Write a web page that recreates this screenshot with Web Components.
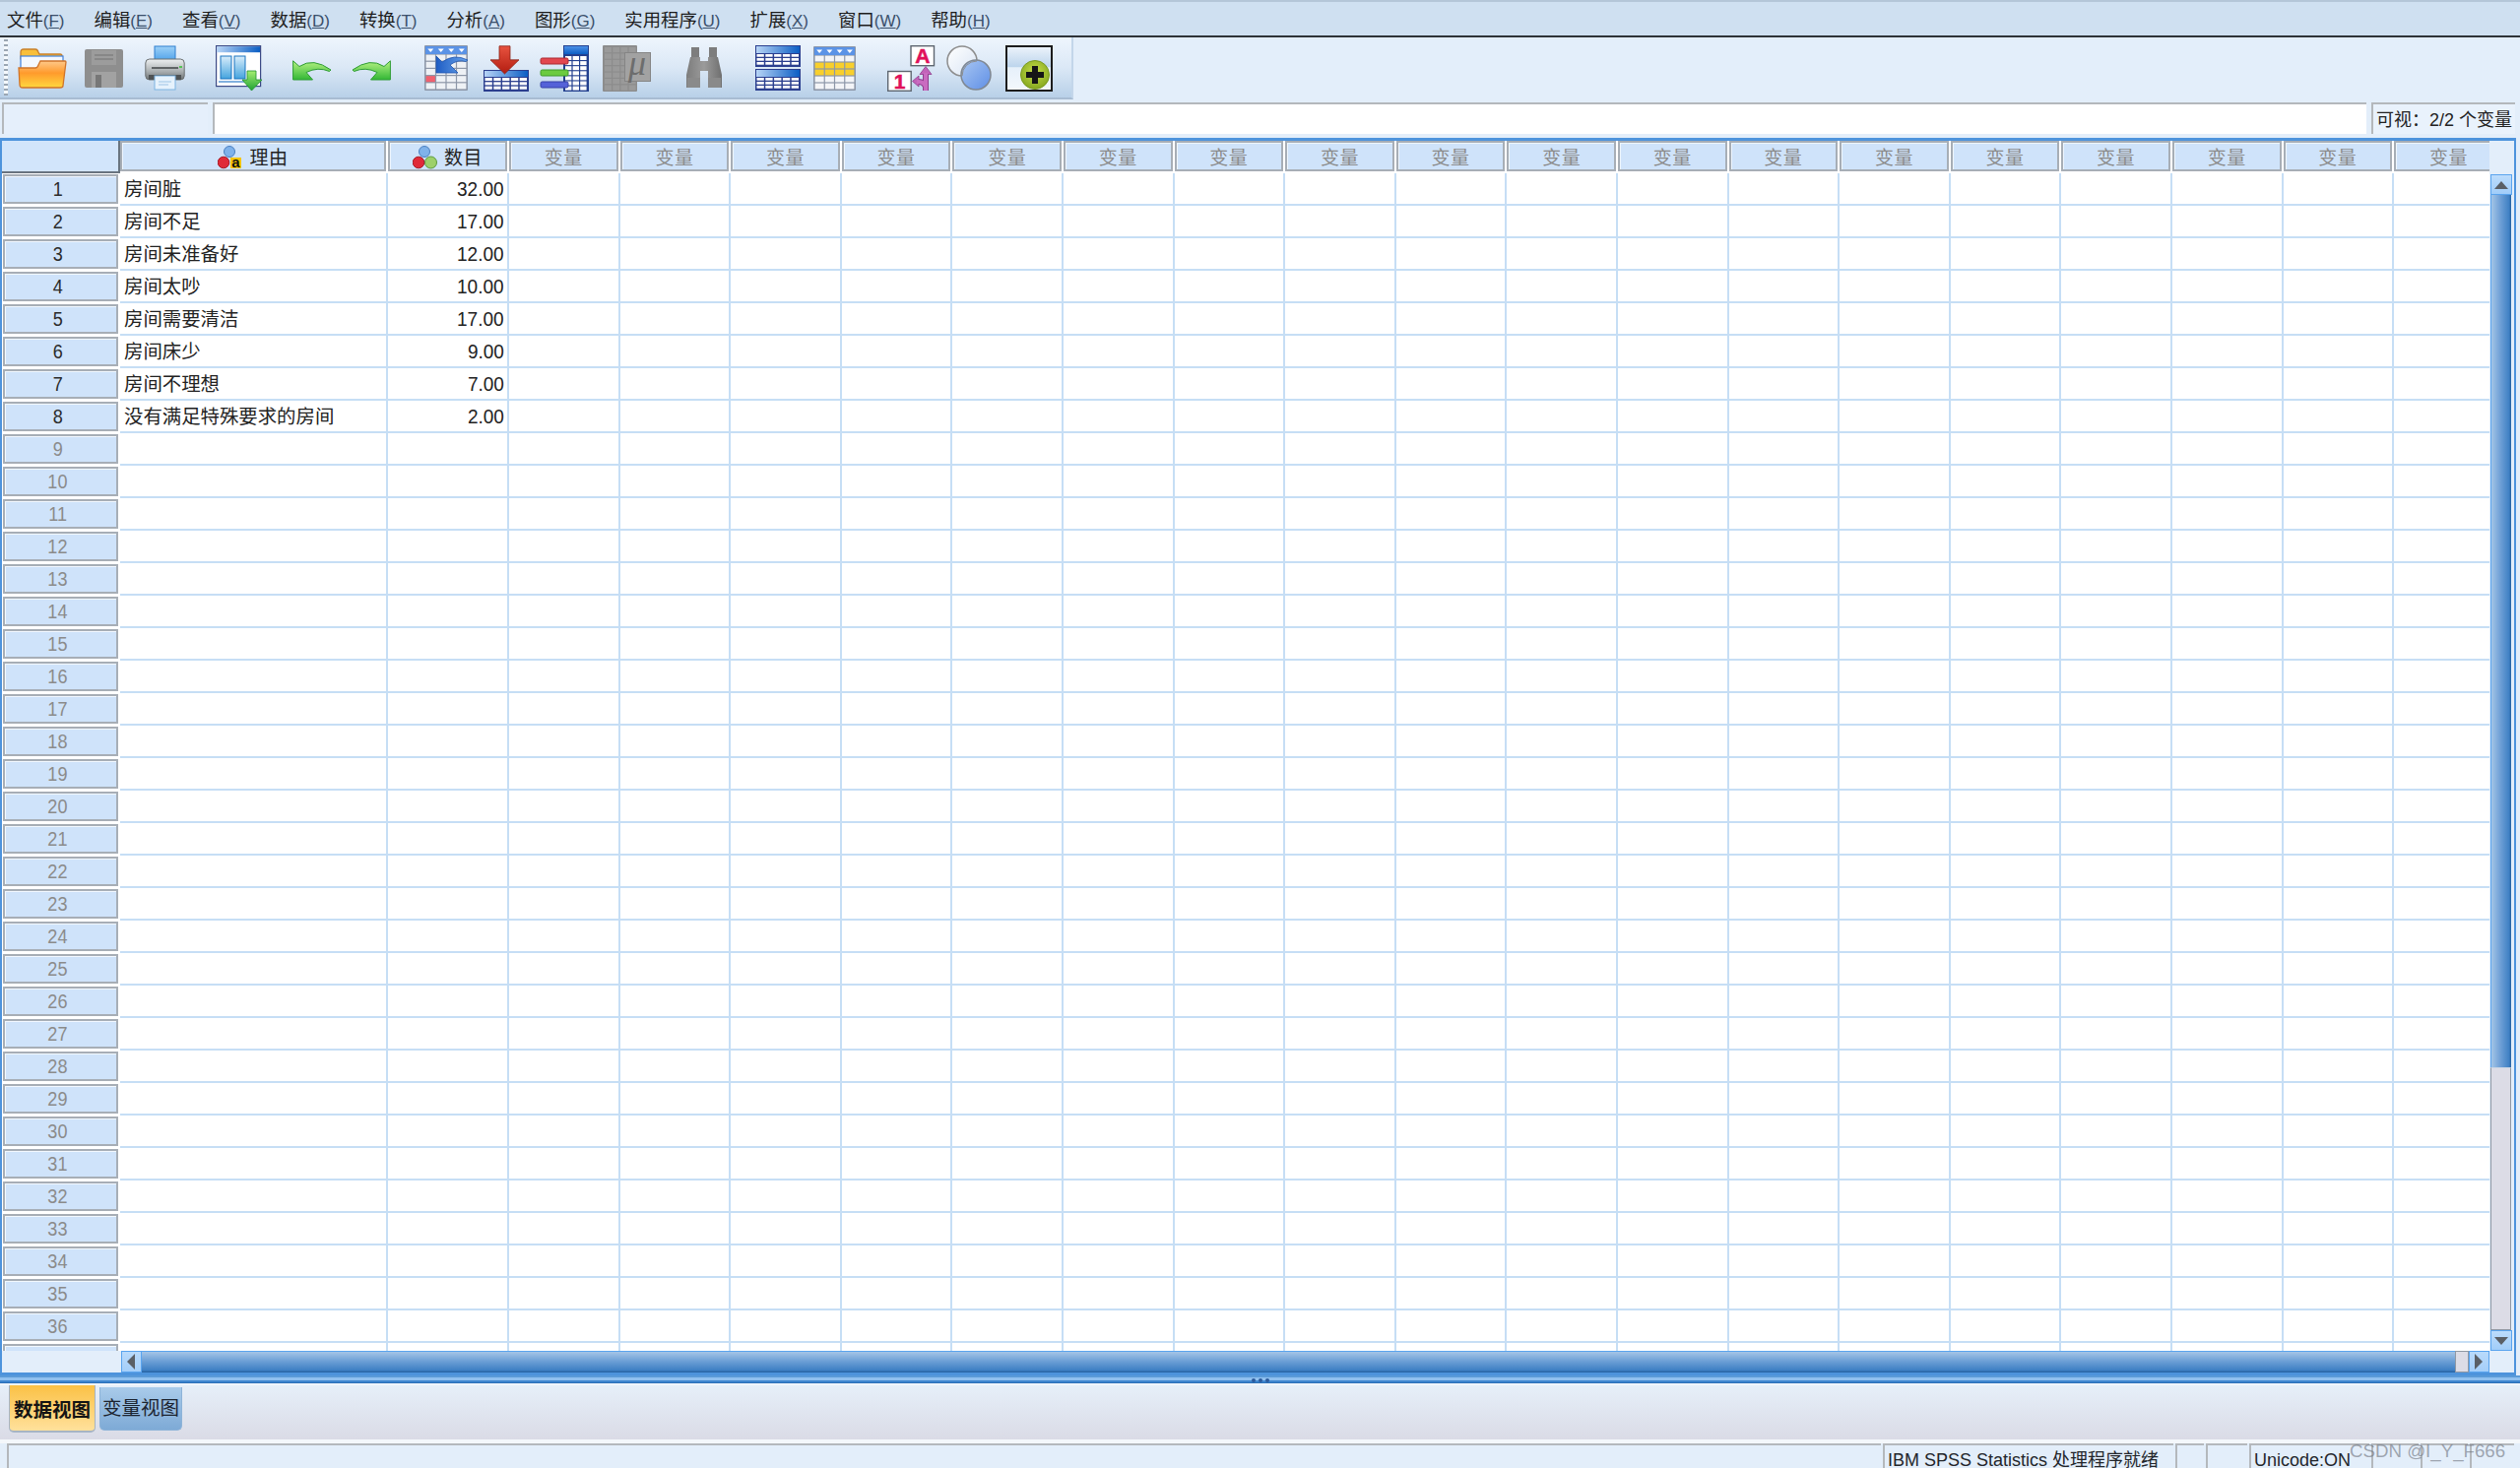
<!DOCTYPE html>
<html lang="zh">
<head>
<meta charset="utf-8">
<title>IBM SPSS Statistics 数据编辑器</title>
<style>
  html, body { margin: 0; padding: 0; height: 100%; overflow: hidden; }
  body {
    display: flex;
    flex-direction: column;
    width: 2559px;
    height: 1491px;
    background: #e3eefa;
    color: #222;
    font-family: "Liberation Sans", "Noto Sans CJK SC", sans-serif;
  }
</style>
</head>
<body>
  <spss-menubar>
    <menu-item key="F">文件</menu-item>
    <menu-item key="E">编辑</menu-item>
    <menu-item key="V">查看</menu-item>
    <menu-item key="D">数据</menu-item>
    <menu-item key="T">转换</menu-item>
    <menu-item key="A">分析</menu-item>
    <menu-item key="G">图形</menu-item>
    <menu-item key="U">实用程序</menu-item>
    <menu-item key="X">扩展</menu-item>
    <menu-item key="W">窗口</menu-item>
    <menu-item key="H">帮助</menu-item>
  </spss-menubar>
  <spss-toolbar></spss-toolbar>
  <spss-entrybar>可视：2/2 个变量</spss-entrybar>
  <spss-datagrid></spss-datagrid>
  <spss-splitter></spss-splitter>
  <spss-tabs>
    <view-tab active>数据视图</view-tab>
    <view-tab>变量视图</view-tab>
  </spss-tabs>
  <spss-statusbar>
    <status-cell w="1903"></status-cell>
    <status-cell w="295">IBM SPSS Statistics 处理程序就绪</status-cell>
    <status-cell w="29"></status-cell>
    <status-cell w="42"></status-cell>
    <status-cell w="122">Unicode:ON</status-cell>
    <status-cell w="48"></status-cell>
    <status-cell w="48"></status-cell>
    <status-cell w="45"></status-cell>
  </spss-statusbar>

<script>
const FONT = `"Liberation Sans", "Noto Sans CJK SC", sans-serif`;

class MenuItem extends HTMLElement {
  constructor() {
    super();
    this.attachShadow({ mode: "open" });
  }
  connectedCallback() {
    this.shadowRoot.innerHTML = `
      <style>
        :host { display: block; font: 18.4px/1 ${FONT}; color: #1d1d1d; white-space: nowrap; }
        span { color: #3a4f6b; font-size: 17px; }
      </style>
      <slot></slot><span>(<u>${this.getAttribute("key")}</u>)</span>`;
  }
}
customElements.define("menu-item", MenuItem);

class SpssMenubar extends HTMLElement {
  constructor() {
    super();
    this.attachShadow({ mode: "open" }).innerHTML = `
      <style>
        :host {
          display: flex;
          flex: none;
          align-items: center;
          gap: 30px;
          box-sizing: border-box;
          height: 38px;
          padding: 4px 0 0 7px;
          background: #cfe0f1;
          border-top: 2px solid #b4c6d8;
          border-bottom: 2px solid #2e3338;
        }
      </style>
      <slot></slot>`;
  }
}
customElements.define("spss-menubar", SpssMenubar);

// small helpers for the table shaped toolbar icons
function blueTable(x, y, w, h, head) {
  let out = `<rect x="${x}" y="${y}" width="${w}" height="${h}" fill="#2b3f8f"/>
    <rect x="${x + 1}" y="${y + 1}" width="${w - 2}" height="${head}" fill="url(#tblHead)"/>`;
  const cols = 5, rows = 3;
  const cw = (w - 2) / cols, ch = (h - head - 3) / rows;
  for (let r = 0; r < rows; r++) {
    for (let c = 0; c < cols; c++) {
      out += `<rect x="${x + 1.5 + c * cw}" y="${y + head + 2 + r * ch}" width="${cw - 1.5}" height="${ch - 1.3}" fill="#fff"/>`;
    }
  }
  return out;
}

function filterTable(w, h, colors) {
  let out = `<rect width="${w}" height="${h}" rx="1" fill="#8d97a8"/>
    <rect x="1" y="1" width="${w - 2}" height="8" fill="#5b93e6"/>`;
  const cw = (w - 2) / 4, ch = (h - 10) / 5;
  for (let c = 0; c < 4; c++) {
    const cx = 1 + c * cw + cw / 2;
    out += `<path d="M${cx - 3} 3.5h6l-3 3.5z" fill="#fff"/>`;
    for (let r = 0; r < 5; r++) {
      out += `<rect x="${1.6 + c * cw}" y="${9.6 + r * ch}" width="${cw - 1.2}" height="${ch - 1.2}" fill="${colors(r, c)}"/>`;
    }
  }
  return out;
}

const arrowPath = "M0.6 .8 L7 6.5 Q21 -3 39 10 L37.5 11.5 Q26 6.5 14 12.5 L20.5 20 H.6 Z";

const TOOL_ICONS = [
  // open folder
  { gap: 18, w: 49, h: 42, body: `
    <defs><linearGradient id="fo" x1="0" y1="0" x2="0" y2="1">
      <stop offset="0" stop-color="#ffc98a"/><stop offset=".45" stop-color="#ff9a2c"/><stop offset="1" stop-color="#ffd83f"/>
    </linearGradient></defs>
    <path d="M3 12V5q0-3 3-3h12q2 0 3 3l1 2h21q2 0 2 2v8z" fill="#f9bf3a" stroke="#c9802a" stroke-width="1.3"/>
    <rect x="3" y="9" width="43" height="14" fill="#f4f8fe" stroke="#3f80dc" stroke-width="1.2"/>
    <path d="M1 21h17q2 0 3-3l2-4h25q1 0 1 1l-3 24q0 2-3 2H5q-3 0-3-3z" fill="url(#fo)" stroke="#d0742a" stroke-width="1.3"/>` },
  // save, disabled
  { gap: 19, w: 39, h: 39, body: `
    <rect width="39" height="39" rx="2" fill="#8e8e8e"/>
    <rect x="7" y="1" width="25" height="15" fill="#9c9c9c"/>
    <path d="M10 6h19M10 10h19" stroke="#808080" stroke-width="1.5"/>
    <rect x="7" y="23" width="25" height="16" fill="#a2a2a2"/>
    <rect x="11" y="26" width="6" height="13" fill="#777"/>` },
  // print
  { gap: 22, w: 41, h: 46, body: `
    <defs><linearGradient id="pr" x1="0" y1="0" x2="0" y2="1">
      <stop offset="0" stop-color="#eef1f2"/><stop offset=".6" stop-color="#a9aeb0"/><stop offset="1" stop-color="#6d7274"/>
    </linearGradient>
    <linearGradient id="pp" x1="0" y1="0" x2="0" y2="1">
      <stop offset="0" stop-color="#9dd0f7"/><stop offset="1" stop-color="#4da2ea"/>
    </linearGradient></defs>
    <rect x="10" y="1" width="21" height="15" fill="url(#pp)" stroke="#2e7fd0"/>
    <path d="M7 14h27v3H7z" fill="#555"/>
    <rect x=".8" y="14" width="39.4" height="21" rx="4" fill="url(#pr)" stroke="#6b7072"/>
    <path d="M7 23h27" stroke="#5f6365" stroke-width="2"/>
    <rect x="35" y="21" width="3" height="2" fill="#56c256"/>
    <rect x="4" y="30" width="33" height="5" fill="#4f5355"/>
    <rect x="10" y="31" width="21" height="14" fill="#e6f2fc" stroke="#7db3e2"/>
    <path d="M14 37h13M14 40h10" stroke="#9dc3e6" stroke-width="1.2"/>` },
  // go to data editor
  { gap: 31, w: 47, h: 46, body: `
    <defs><linearGradient id="tblHead" x1="0" y1="0" x2="1" y2="0">
      <stop offset="0" stop-color="#b7d4f6"/><stop offset="1" stop-color="#0b5ec4"/>
    </linearGradient>
    <linearGradient id="gd" x1="0" y1="0" x2="0" y2="1">
      <stop offset="0" stop-color="#a6ef71"/><stop offset="1" stop-color="#1fa234"/>
    </linearGradient>
    <linearGradient id="cl" x1="0" y1="0" x2="0" y2="1">
      <stop offset="0" stop-color="#d9edfb"/><stop offset="1" stop-color="#45a4de"/>
    </linearGradient></defs>
    <rect x=".6" y=".6" width="45" height="41" fill="#fff" stroke="#3c4a86" stroke-width="1.2"/>
    <rect x="1.2" y="1.2" width="43.8" height="6" fill="url(#tblHead)"/>
    <rect x="5" y="11" width="11" height="23" fill="url(#cl)" stroke="#1b74c0"/>
    <rect x="19" y="11" width="11" height="23" fill="url(#cl)" stroke="#1b74c0"/>
    <path d="M3 37h30" stroke="#4b8fd0" stroke-width="1.4"/>
    <path d="M32 26h9v9h6L36.500 46 27 35h5z" fill="url(#gd)" stroke="#1e8f2e" stroke-width=".8"/>` },
  // undo
  { gap: 31, w: 40, h: 21, top: 5, body: `
    <defs><linearGradient id="ar" x1="0" y1="0" x2="0" y2="1">
      <stop offset="0" stop-color="#b6f282"/><stop offset="1" stop-color="#32b736"/>
    </linearGradient></defs>
    <path d="${arrowPath}" fill="url(#ar)" stroke="#2f9c35" stroke-width="1"/>` },
  // redo
  { gap: 20, w: 40, h: 21, top: 5, body: `
    <defs><linearGradient id="ar2" x1="0" y1="0" x2="0" y2="1">
      <stop offset="0" stop-color="#b6f282"/><stop offset="1" stop-color="#32b736"/>
    </linearGradient></defs>
    <path transform="matrix(-1 0 0 1 40 0)" d="${arrowPath}" fill="url(#ar2)" stroke="#2f9c35" stroke-width="1"/>` },
  // go to case
  { gap: 34, w: 44, h: 46, body: `
    <defs><linearGradient id="ba" x1="0" y1="0" x2="1" y2="0">
      <stop offset="0" stop-color="#1f5dc4"/><stop offset="1" stop-color="#6aa4ea"/>
    </linearGradient></defs>
    ${filterTable(44, 46, (r, c) => (r === 3 && c === 0 ? "#f0606e" : "#eef1f5"))}
    <path d="M12 11 L18 17 Q30 8 44 15 L42 16.500 Q34 14 26 20 L34 28 H12 Z" fill="url(#ba)" stroke="#1f54ad" stroke-width=".8"/>` },
  // import data, red arrow over table
  { gap: 16, w: 46, h: 47, body: `
    <defs><linearGradient id="ra" x1="0" y1="0" x2="0" y2="1">
      <stop offset="0" stop-color="#e8533f"/><stop offset="1" stop-color="#b21c10"/>
    </linearGradient>
    <linearGradient id="th2" x1="0" y1="0" x2="1" y2="0">
      <stop offset="0" stop-color="#b7d4f6"/><stop offset="1" stop-color="#0b5ec4"/>
    </linearGradient></defs>
    ${blueTable(0, 25, 46, 22, 6).replace("tblHead", "th2")}
    <path d="M16 .8h11v14h9L21.500 29 7 14.800h9z" fill="url(#ra)" stroke="#8a2318" stroke-width=".8"/>` },
  // variables
  { gap: 12, w: 49, h: 47, body: `
    <defs><linearGradient id="th3" x1="0" y1="0" x2="0" y2="1">
      <stop offset="0" stop-color="#4c90e6"/><stop offset="1" stop-color="#0b5ec4"/>
    </linearGradient></defs>
    <rect x="23" y="0" width="26" height="47" fill="#23408f"/>
    <rect x="24" y="1" width="24" height="8" fill="url(#th3)"/>
    ${[0,1,2,3,4,5,6].map(r => [0,1,2].map(c => `<rect x="${25 + c * 7.6}" y="${11 + r * 5.1}" width="6.400" height="4" fill="#fff"/>`).join("")).join("")}
    <rect x="0" y="13" width="28" height="6" rx="1.500" fill="#e2474f" stroke="#aa2a33"/>
    <rect x="0" y="25" width="28" height="6" rx="1.500" fill="#6ccb40" stroke="#3f9a2b"/>
    <rect x="0" y="37" width="28" height="6" rx="1.500" fill="#5562d8" stroke="#3740a6"/>` },
  // descriptives, disabled
  { gap: 14, w: 49, h: 47, body: `
    <rect width="35" height="47" rx="1" fill="#8c8c8c"/>
    ${[0,1,2,3].map(c => [0,1,2,3,4,5,6].map(r => `<rect x="${2 + c * 8.2}" y="${2 + r * 6.400}" width="7" height="5.300" fill="#9a9a9a"/>`).join("")).join("")}
    <rect x="22.500" y="7.500" width="26" height="29" fill="#a2a2a2" stroke="#858585"/>
    <text x="35" y="30" font-family="Liberation Serif, serif" font-style="italic" font-size="36" fill="#6d6d6d" text-anchor="middle">μ</text>` },
  // find, disabled
  { gap: 36, w: 36, h: 42, body: `
    <defs><linearGradient id="bn" x1="0" y1="0" x2="1" y2="0">
      <stop offset="0" stop-color="#7d7d7d"/><stop offset=".5" stop-color="#9b9b9b"/><stop offset="1" stop-color="#6f6f6f"/>
    </linearGradient></defs>
    <rect x="5" y="0" width="8" height="10" fill="#7d7d7d"/>
    <rect x="23" y="0" width="8" height="10" fill="#7d7d7d"/>
    <path d="M4 10h10v4h8v-4h10l4 18v13H22V24h-8v17H0V28z" fill="url(#bn)"/>
    <rect x="1" y="31" width="13" height="10" fill="#8a8a8a"/>
    <rect x="22" y="31" width="13" height="10" fill="#8a8a8a"/>` },
  // split file, two tables
  { gap: 34, w: 46, h: 46, body: `
    <defs><linearGradient id="th4" x1="0" y1="0" x2="1" y2="0">
      <stop offset="0" stop-color="#b7d4f6"/><stop offset="1" stop-color="#0b5ec4"/>
    </linearGradient></defs>
    ${blueTable(0, 0, 46, 22, 7).replaceAll("tblHead", "th4")}
    ${blueTable(0, 24, 46, 22, 7).replaceAll("tblHead", "th4")}` },
  // select cases, yellow rows
  { gap: 13, w: 43, h: 45, body: filterTable(43, 45, r => (r === 1 || r === 2 ? "#f8cf2c" : "#f3f4f7")) },
  // value labels
  { gap: 32, w: 48, h: 47, body: `
    <rect x="24" y=".7" width="23.500" height="20" fill="#fff" stroke="#5e6670" stroke-width="1.400"/>
    <text x="35.800" y="18" font-family="Liberation Sans, sans-serif" font-weight="700" font-size="21" fill="#e0105a" stroke="#e0105a" stroke-width=".5" text-anchor="middle">A</text>
    <rect x=".7" y="26.500" width="23.500" height="19.800" fill="#fff" stroke="#5e6670" stroke-width="1.400"/>
    <text x="12.500" y="43.500" font-family="Liberation Sans, sans-serif" font-weight="700" font-size="21" fill="#e0105a" stroke="#e0105a" stroke-width=".5" text-anchor="middle">1</text>
    <path d="M39 46V28M39 42Q37 37 32 37H30" fill="none" stroke="#8f3f8e" stroke-width="6"/>
    <path d="M33 29.500L39 21.500 45 29.500z M32 31L25.500 36.500 32 42z" fill="#c263b9" stroke="#8f3f8e" stroke-width=".8"/>
    <path d="M39 46V28M39 42Q37 37 32 37H30" fill="none" stroke="#c96cc0" stroke-width="4"/>` },
  // use sets
  { gap: 12, w: 46, h: 46, body: `
    <defs><linearGradient id="c1" x1="0" y1="0" x2="1" y2="1">
      <stop offset="0" stop-color="#fff"/><stop offset="1" stop-color="#d8e4f4"/>
    </linearGradient>
    <linearGradient id="c2" x1="0" y1="0" x2="1" y2="1">
      <stop offset="0" stop-color="#a8c6f2"/><stop offset="1" stop-color="#5f8fe6"/>
    </linearGradient></defs>
    <circle cx="16" cy="16" r="15" fill="url(#c1)" stroke="#8d8d8d" stroke-width="1.500"/>
    <circle cx="30" cy="30" r="15" fill="url(#c2)" stroke="#7f8791" stroke-width="1.500"/>
    <path d="M16 31A15 15 0 0 1 31 16" fill="none" stroke="#8d8d8d" stroke-width="1"/>` },
  // extension bundle
  { gap: 14, w: 48, h: 47, body: `
    <defs><linearGradient id="pb" x1="0" y1="0" x2="0" y2="1">
      <stop offset="0" stop-color="#edf4fb"/><stop offset=".47" stop-color="#bcd4ec"/><stop offset=".48" stop-color="#e6f0fa"/><stop offset="1" stop-color="#f4f8fd"/>
    </linearGradient>
    <radialGradient id="pc" cx=".5" cy=".4" r=".6">
      <stop offset="0" stop-color="#c8df4a"/><stop offset="1" stop-color="#86a820"/>
    </radialGradient></defs>
    <rect x="1" y="1" width="46" height="45" fill="url(#pb)" stroke="#1c1c1c" stroke-width="2"/>
    <circle cx="30" cy="30" r="14.500" fill="url(#pc)" stroke="#7a9a22"/>
    <path d="M27 21h6v6h6v6h-6v6h-6v-6h-6v-6h6z" fill="#161616"/>` },
];

class SpssToolbar extends HTMLElement {
  constructor() {
    super();
    this.attachShadow({ mode: "open" });
  }
  connectedCallback() {
    const icons = TOOL_ICONS.map(
      (i) => `<svg style="margin-left:${i.gap}px;margin-top:${i.top || 0}px" width="${i.w}" height="${i.h}" viewBox="0 0 ${i.w} ${i.h}">${i.body}</svg>`
    ).join("");
    this.shadowRoot.innerHTML = `
      <style>
        :host { display: block; flex: none; height: 63px; background: #e3eefa; }
        .bar {
          position: relative;
          display: flex;
          align-items: center;
          box-sizing: border-box;
          width: 1090px;
          height: 63px;
          padding-top: 1px;
          background: linear-gradient(#eef5fd, #dbe8f6 50%, #b8d0e8);
          border-right: 2px solid #c3d6ea;
          border-bottom: 2px solid #a8bcd2;
        }
        .grip {
          position: absolute;
          left: 4px;
          top: 2px;
          bottom: 2px;
          width: 4px;
          background: repeating-linear-gradient(#9aa6b2 0 2px, #f4f8fc 2px 5px);
        }
        svg { flex: none; display: block; overflow: visible; }
      </style>
      <div class="bar"><div class="grip"></div>${icons}</div>`;
  }
}
customElements.define("spss-toolbar", SpssToolbar);

class SpssEntrybar extends HTMLElement {
  constructor() {
    super();
    this.attachShadow({ mode: "open" }).innerHTML = `
      <style>
        :host {
          display: flex;
          flex: none;
          gap: 5px;
          box-sizing: border-box;
          height: 39px;
          padding: 3px 5px 4px 2px;
          font: 18px/1 ${FONT};
          color: #222;
        }
        div { box-sizing: border-box; height: 32px; border-top: 2px solid #b4b8bc; border-left: 2px solid #b4b8bc; }
        .name { width: 209px; background: #e5effb; }
        .value { flex: 1; background: #fff; margin-right: 0; }
        .info {
          width: 146px;
          display: flex;
          align-items: center;
          padding: 2px 0 0 3px;
          white-space: nowrap;
          background: #e9f2fc;
        }
      </style>
      <div class="name"></div><div class="value"></div>
      <div class="info"><slot></slot></div>`;
  }
}
customElements.define("spss-entrybar", SpssEntrybar);

const CASES = [
  ["房间脏", "32.00"],
  ["房间不足", "17.00"],
  ["房间未准备好", "12.00"],
  ["房间太吵", "10.00"],
  ["房间需要清洁", "17.00"],
  ["房间床少", "9.00"],
  ["房间不理想", "7.00"],
  ["没有满足特殊要求的房间", "2.00"],
];
const VAR_COLS = 18;
const ROW_COUNT = 37;

function varIcon(kind) {
  const third = kind === "string"
    ? `<rect x="13" y="12" width="11" height="11" fill="#f6c500"/><text x="18.500" y="22" font-family="Liberation Sans, sans-serif" font-weight="700" font-size="15" fill="#111" text-anchor="middle">a</text>`
    : `<circle cx="18.500" cy="17" r="6" fill="#9dd06a" stroke="#5b9a3c"/>`;
  return `<svg width="25" height="24" viewBox="0 0 25 24">
    <circle cx="12" cy="6" r="5.500" fill="#7fb2ea" stroke="#4a7fc0"/>
    ${third}
    <circle cx="6" cy="17" r="5.800" fill="#e02a38" stroke="#a81c28"/>
  </svg>`;
}

class SpssDatagrid extends HTMLElement {
  constructor() {
    super();
    this.attachShadow({ mode: "open" });
  }
  connectedCallback() {
    let cells = `<div class="corner"></div>
      <div class="hd">${varIcon("string")}<b>理由</b></div>
      <div class="hd">${varIcon("scale")}<b>数目</b></div>`;
    for (let i = 0; i < VAR_COLS; i++) cells += `<div class="hd off"><b>变量</b></div>`;
    for (let r = 0; r < ROW_COUNT; r++) {
      const row = CASES[r];
      // the last row is clipped by the scrollbar, only the top of its box shows
      const label = r + 1 < ROW_COUNT ? `<span>${r + 1}</span>` : "";
      cells += `<div class="rh ${row ? "" : "off"}">${label}</div>
        <div class="c">${row ? row[0] : ""}</div>
        <div class="c n">${row ? `<span>${row[1]}</span>` : ""}</div>`;
      for (let i = 0; i < VAR_COLS; i++) cells += `<div class="c"></div>`;
    }
    this.shadowRoot.innerHTML = `
      <style>
        :host {
          display: flex;
          flex-direction: column;
          flex: 1;
          min-height: 0;
          box-sizing: border-box;
          width: 2555px;
          border: 2px solid #4d93dc;
          border-top-width: 3px;
          border-bottom-width: 3px;
          background: #e3eefa;
        }
        .top { flex: 1; min-height: 0; display: flex; }
        .view { width: 2526px; overflow: hidden; background: #fff; }
        .sheet {
          display: grid;
          grid-template-columns: 120px 272px 123px repeat(${VAR_COLS}, 112.6px);
          grid-auto-rows: 33px;
          font: 19.4px/1 ${FONT};
          color: #222;
        }
        .corner {
          background: #d2e5fb;
          border-right: 2px solid #69747f;
          border-bottom: 2px solid #69747f;
        }
        .hd {
          display: flex;
          align-items: center;
          justify-content: center;
          gap: 7px;
          box-sizing: border-box;
          height: 31px;
          margin-right: 2px;
          padding-top: 3px;
          font-size: 19px;
          background: #cfe3fa;
          border: 2px solid #a7aeb6;
          box-shadow: inset 1px 1px 0 #eef6ff;
        }
        .hd b { font-weight: 400; letter-spacing: .5px; }
        .hd.off { color: #8b8b8b; }
        .hd svg { flex: none; display: block; }
        .rh {
          display: flex;
          align-items: center;
          justify-content: center;
          box-sizing: border-box;
          height: 30px;
          margin: 1px 2px 0 1px;
          padding-right: 6px;
          background: #cfe3fa;
          border: 2px solid #a7aeb6;
          box-shadow: inset 1px 1px 0 #f2f8ff;
          color: #2b2b2b;
        }
        .rh span { display: block; font-size: 20.5px; transform: scaleX(.88); }
        .rh.off { color: #8b8b8b; }
        .c {
          box-sizing: border-box;
          overflow: hidden;
          padding: 0 0 0 4px;
          line-height: 33px;
          white-space: nowrap;
          background: #fff;
          border-right: 2px solid #c6def5;
          border-bottom: 2px solid #c6def5;
        }
        .c.n { padding: 0 3px 0 0; text-align: right; line-height: 32px; }
        .c.n span { display: inline-block; font-size: 21px; transform: scaleX(.905); transform-origin: 100% 50%; }
        .vbar {
          box-sizing: border-box;
          width: 23px;
          padding: 34px 1px 0 1px;
          display: flex;
          flex-direction: column;
        }
        .sb-btn {
          flex: none;
          display: flex;
          align-items: center;
          justify-content: center;
          box-sizing: border-box;
          width: 22px;
          height: 21px;
          background: linear-gradient(#bcdcfc, #a1cdf9);
          border: 1px solid #5aa4ee;
        }
        .vtrack {
          flex: none;
          box-sizing: border-box;
          height: 886px;
          background: linear-gradient(90deg, #a3c4e6, #6fa0d6 45%, #3f80c4 90%, #24609e);
          border-left: 1px solid #5aa4ee;
        }
        .vthumb {
          flex: 1;
          box-sizing: border-box;
          background: #dcdce6;
          border: 1px solid #8f98a4;
          border-top-color: #c9d5e4;
        }
        .bottom { flex: none; display: flex; height: 22px; }
        .blank { width: 120.5px; flex: none; }
        .hbar { display: flex; width: 2405px; flex: none; }
        .htrack {
          flex: 1;
          box-sizing: border-box;
          background: linear-gradient(#a5c5e6, #6c9fd6 45%, #3f80c4 88%, #24609e);
          border-top: 1px solid #5aa4ee;
        }
        .hthumb { flex: none; box-sizing: border-box; width: 14px; background: #dcdce6; border: 1px solid #8f98a4; }
        .hbar .sb-btn { height: 22px; background: linear-gradient(#b9dafb, #a4cef9); }
        .hbar .sb-btn.wide { width: 21px; }
        i { display: block; width: 0; height: 0; border-style: solid; border-color: transparent; }
        .up { border-width: 0 7px 8px; border-bottom-color: #5a5f66; }
        .down { border-width: 8px 7px 0; border-top-color: #5a5f66; }
        .left { border-width: 8px 8px 8px 0; border-right-color: #5a5f66; }
        .right { border-width: 8px 0 8px 8px; border-left-color: #5a5f66; }
      </style>
      <div class="top">
        <div class="view"><div class="sheet">${cells}</div></div>
        <div class="vbar">
          <div class="sb-btn"><i class="up"></i></div>
          <div class="vtrack"></div>
          <div class="vthumb"></div>
          <div class="sb-btn"><i class="down"></i></div>
        </div>
      </div>
      <div class="bottom">
        <div class="blank"></div>
        <div class="hbar">
          <div class="sb-btn wide"><i class="left"></i></div>
          <div class="htrack"></div>
          <div class="hthumb"></div>
          <div class="sb-btn wide"><i class="right"></i></div>
        </div>
      </div>`;
  }
}
customElements.define("spss-datagrid", SpssDatagrid);

class SpssSplitter extends HTMLElement {
  constructor() {
    super();
    this.attachShadow({ mode: "open" }).innerHTML = `
      <style>
        :host {
          display: flex;
          flex: none;
          align-items: center;
          justify-content: center;
          gap: 3px;
          height: 10px;
          background: linear-gradient(#5a9ad8 0 2px, #8fc0ef 2px 5px, #3f86cf 5px 7px, #2a6fb8 7px 8px, #f0f5fb 8px);
        }
        span { width: 4px; height: 4px; border-radius: 50%; background: #2c5a9c; margin-bottom: 1px; }
      </style>
      <span></span><span></span><span></span>`;
  }
}
customElements.define("spss-splitter", SpssSplitter);

class ViewTab extends HTMLElement {
  constructor() {
    super();
    this.attachShadow({ mode: "open" }).innerHTML = `
      <style>
        :host {
          display: flex;
          align-items: center;
          justify-content: center;
          box-sizing: border-box;
          width: 84px;
          height: 44px;
          margin-top: 2px;
          font: 19.5px/1 ${FONT};
          color: #1c2430;
          white-space: nowrap;
          background: linear-gradient(#a9cbea, #7eaad6);
          border-radius: 0 0 5px 5px;
          border: 1px solid #8db3d8;
          border-top: 0;
        }
        :host([active]) {
          width: 88px;
          height: 48px;
          margin-top: 0;
          padding-top: 6px;
          font-weight: 700;
          color: #141414;
          background: linear-gradient(#fbc145, #ffe19c);
          border: 1px solid #a6b4c4;
          border-top: 0;
          border-bottom-width: 2px;
        }
      </style>
      <slot></slot>`;
  }
}
customElements.define("view-tab", ViewTab);

class SpssTabs extends HTMLElement {
  constructor() {
    super();
    this.attachShadow({ mode: "open" }).innerHTML = `
      <style>
        :host {
          display: flex;
          flex: none;
          align-items: flex-start;
          gap: 4px;
          box-sizing: border-box;
          height: 55px;
          padding-left: 9px;
          background: linear-gradient(#e6eff9, #dadbe6);
        }
      </style>
      <slot></slot>`;
  }
}
customElements.define("spss-tabs", SpssTabs);

class StatusCell extends HTMLElement {
  constructor() {
    super();
    this.attachShadow({ mode: "open" });
  }
  connectedCallback() {
    this.shadowRoot.innerHTML = `
      <style>
        :host {
          display: flex;
          align-items: center;
          flex: none;
          box-sizing: border-box;
          width: ${this.getAttribute("w")}px;
          padding: 6px 0 0 3px;
          font: 18px/1 ${FONT};
          color: #23262b;
          white-space: nowrap;
          border-top: 2px solid #b4b8bc;
          border-left: 2px solid #b4b8bc;
        }
      </style>
      <slot></slot>`;
  }
}
customElements.define("status-cell", StatusCell);

class SpssStatusbar extends HTMLElement {
  constructor() {
    super();
    this.attachShadow({ mode: "open" }).innerHTML = `
      <style>
        :host {
          position: relative;
          display: flex;
          flex: none;
          gap: 2px;
          box-sizing: border-box;
          height: 29px;
          padding: 4px 0 0 7px;
          background: linear-gradient(#f4f7fb 0 4px, #e3eefa 4px);
          overflow: hidden;
        }
        .mark {
          position: absolute;
          left: 2386px;
          top: 2px;
          font: 18.7px/1.100 ${FONT};
          color: rgba(110, 115, 125, .6);
          white-space: nowrap;
        }
      </style>
      <slot></slot><div class="mark">CSDN @I_Y_F666</div>`;
  }
}
customElements.define("spss-statusbar", SpssStatusbar);
</script>
</body>
</html>
